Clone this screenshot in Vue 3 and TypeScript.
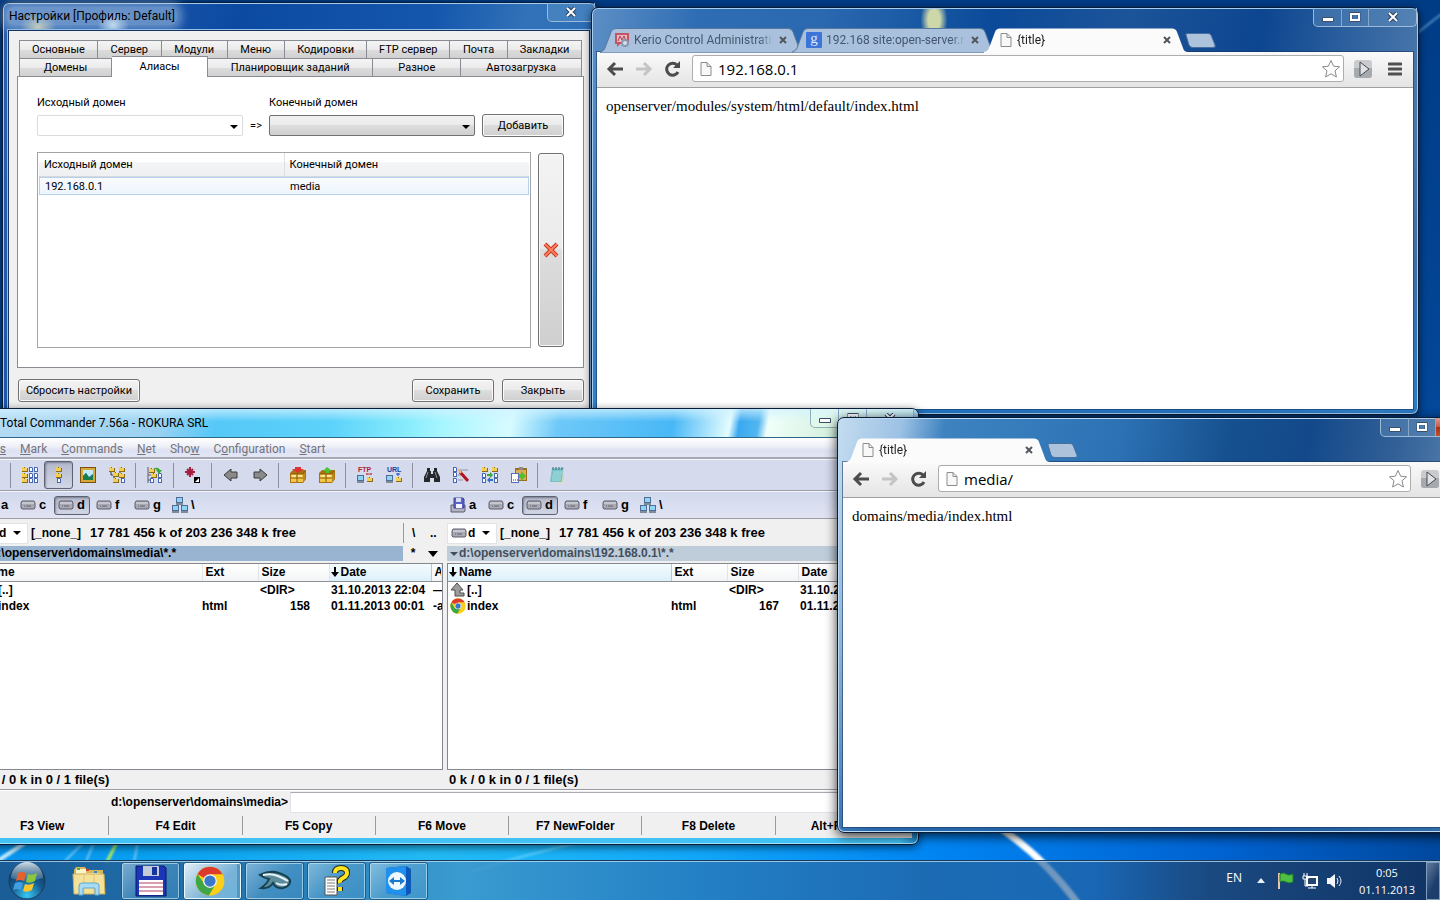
<script setup lang="ts">
import { ref } from 'vue'

interface Shape {
  d?: string
  fill?: string
  stroke?: string
  w?: number
  text?: string
  x?: number
  y?: number
  size?: number
}

const box = (x: number, y: number, w: number, h: number, fill: string, stroke = 'none'): Shape => ({
  d: `M${x} ${y}h${w}v${h}h${-w}z`, fill, stroke, w: 1,
})
const folder = (x: number, y: number): Shape[] => [
  { d: `M${x} ${y}h3v1h3v4h-6z`, fill: '#8a6a14' },
  { d: `M${x} ${y}h2v1h3v3h-5z`, fill: '#f3cf54' },
]
const doc = (x: number, y: number): Shape[] => [
  { d: `M${x} ${y}h3l1 1v4h-4z`, fill: '#4666b8' },
  { d: `M${x + 1} ${y + 1}h2v3h-2z`, fill: '#ffffff' },
]
const pc = (x: number, y: number): Shape[] => [
  box(x, y, 7, 6, '#4f6c94'),
  box(x + 1, y + 1, 5, 4, '#8fd4f6'),
  box(x, y + 6, 7, 2, '#7f8b96'),
]
const crate = (arrow: string, up: boolean): Shape[] => [
  { d: 'M0 6l3-3h13v9l-3 4H0z', fill: '#a87310' },
  { d: 'M1 7h12v8H1z', fill: '#f2c648' },
  { d: 'M13 7l2-3v8l-2 3z', fill: '#c28b19' },
  { d: 'M7 7v8M1 11h12M1 7h12l2-3', stroke: '#8b5b08', w: 1 },
  { d: 'M2 8h4v2H2zM8 8h4v2H8z', fill: '#fbe69a' },
  { d: up ? 'M8 0l5 4h-3v2H7V4H4z' : 'M5 0h6v2h3L8 6 2 2h3z', fill: arrow },
]

const icons: Record<string, Shape[]> = {
  brief: [...folder(0, 0), ...folder(0, 6), ...folder(0, 11), ...doc(7, 0), ...doc(7, 6), ...doc(7, 11), ...doc(12, 0), ...doc(12, 6), ...doc(12, 11)],
  full: [...folder(5, 0), ...folder(5, 6), ...doc(6, 11)],
  thumbs: [
    box(0, 0, 16, 16, '#7a5310'), box(1, 1, 14, 14, '#d9a83c'), box(3, 3, 10, 10, '#2b5f9a'),
    { d: 'M3 3h10v4L9 10 6 6 3 9z', fill: '#bfe9fb' }, { d: 'M3 9l3-3 3 5 4-3v5H3z', fill: '#15804a' },
  ],
  tree: [{ d: 'M2 4v4h3M5 8v5h3M11 3v5h2', stroke: '#333333', w: 1 }, ...folder(0, 0), ...folder(4, 5), ...folder(4, 11), ...folder(10, 0), ...folder(10, 6), ...doc(12, 11)],
  branch: [
    { d: 'M1 0v16M1 8h4M1 13h3', stroke: '#5a5a6a', w: 1 }, ...folder(2, 1), ...folder(4, 6), ...doc(3, 11), ...doc(11, 6), ...doc(11, 11),
    { d: 'M6 2q5-3 7 1h2l-3 4-3-4h2q-2-1-5-1z', fill: '#35a83a' },
  ],
  select: [
    { d: 'M5 0v10M0 5h10M2 2l6 6M8 2L2 8', stroke: '#a51f3c', w: 2 },
    box(9, 10, 6, 6, '#000000'), { d: 'M10 15l4-4v4z', fill: '#ffffff' },
  ],
  back: [{ d: 'M1 8l7-6v3h6v6H8v3z', fill: '#8a8a8a', stroke: '#3c3c3c', w: 1 }],
  forward: [{ d: 'M15 8L8 2v3H2v6h6v3z', fill: '#8a8a8a', stroke: '#3c3c3c', w: 1 }],
  pack: crate('#e03434', false),
  unpack: crate('#49c432', true),
  ftp: [{ text: 'FTP', x: 1, y: 5, size: 7, fill: '#b02238' }, ...pc(0, 8), ...folder(10, 10), { d: 'M9 7h6M10 6v2M14 6v2', stroke: '#c23a3a', w: 1 }],
  url: [{ text: 'URL', x: 1, y: 5, size: 7, fill: '#213f9c' }, ...pc(0, 8), ...folder(10, 10), { d: 'M12 6v3M10 7h4', stroke: '#2353b8', w: 1 }],
  search: [
    { d: 'M3 1h3v3h1v3h2V4h1V1h3v3l3 6v5h-6v-4H6v4H0v-5l3-6z', fill: '#26282c' },
    { d: 'M4 5l-2 6M11 5l2 6', stroke: '#8b9199', w: 1 },
  ],
  rename: [...doc(0, 0), ...doc(0, 5), ...doc(0, 11), { d: 'M5 3h10M5 8h3M5 13h5', stroke: '#8795a8', w: 1 }, { d: 'M7 5l8 9', stroke: '#b0171c', w: 3 }, { d: 'M5 2l3 4', stroke: '#efb37a', w: 2 }],
  sync: [...folder(0, 0), ...folder(10, 0), ...doc(0, 6), ...doc(0, 11), ...doc(12, 6), ...doc(12, 11), { d: 'M5 7h3V5l3 3-3 3V9H5z', fill: '#35a83a' }, { d: 'M11 12H8v-2l-3 3 3 3v-2h3z', fill: '#2f70c8' }],
  clip: [
    box(4, 1, 12, 13, '#9a6e17'), box(5, 3, 10, 10, '#d8ae57'), box(8, 0, 4, 3, '#8b8b8b'),
    box(0, 6, 8, 10, '#5a70b4'), box(1, 7, 6, 8, '#ffffff'), { d: 'M2 13h1M4 13h1M6 13h1', stroke: '#29376b', w: 1 },
    { d: 'M8 7h2V4l5 5-5 5v-3H8z', fill: '#53bd2f' },
  ],
  notepad: [
    { d: 'M3 1h12l-1 14H1z', fill: '#75c2c8' }, { d: 'M14 2h1l-1 14H4l9-1z', fill: '#e9dfb5' },
    { d: 'M4 5h9M4 7h9M3 9h9M3 11h9M3 13h9', stroke: '#a9dde0', w: 1 }, { d: 'M4 0v3M7 0v3M10 0v3M13 0v3', stroke: '#436f80', w: 1 },
  ],
  drive: [
    { d: 'M2 4h12l1 2v5l-1 1H2l-1-1V6z', fill: '#a9a9b4', stroke: '#5e5e6c', w: 1 },
    { d: 'M2 6h12', stroke: '#e4e4ec', w: 1 }, { d: 'M4 9h1M6 9h5', stroke: '#62626e', w: 1 },
  ],
  floppy: [
    { d: 'M1 8h14v6l-1 1H1z', fill: '#b3b3c2', stroke: '#5e5e6c', w: 1 },
    { d: 'M4 1h9l1 1v9H4z', fill: '#5a62c4', stroke: '#3c4497', w: 1 }, box(6, 1, 5, 4, '#d8daf2'), box(6, 7, 6, 4, '#f4f4ff'),
  ],
  net: [...pc(4, 0), ...pc(0, 8), ...pc(9, 8)],
  up: [{ d: 'M7 1l6 7h-3v3h4v3H5V8H1z', fill: '#9c9c9c', stroke: '#4c4c4c', w: 1 }],
}

interface Tab { title: string; icon: string; active: boolean }
const browsers = [
  {
    id: 'browser-server', address: '192.168.0.1', body: 'openserver/modules/system/html/default/index.html',
    tabs: [
      { title: 'Kerio Control Administration', icon: 'kerio', active: false },
      { title: '192.168 site:open-server.ru', icon: 'google', active: false },
      { title: '{title}', icon: 'page', active: true },
    ] as Tab[],
  },
  {
    id: 'browser-media', address: 'media/', body: 'domains/media/index.html',
    tabs: [{ title: '{title}', icon: 'page', active: true }] as Tab[],
  },
]

const tabRows = [
  [['Основные', 78], ['Сервер', 64], ['Модули', 66], ['Меню', 57], ['Кодировки', 83], ['FTP сервер', 83], ['Почта', 58], ['Закладки', 74]],
  [['Домены', 92], ['Алиасы', 96], ['Планировщик заданий', 166], ['Разное', 88], ['Автозагрузка', 121]],
] as [string, number][][]

const menu = [['File', 's', ''], ['', 'M', 'ark'], ['', 'C', 'ommands'], ['', 'N', 'et'], ['Sho', 'w', ''], ['C', 'o', 'nfiguration'], ['', 'S', 'tart']]
const tools = ['', '|', 'brief', 'full', 'thumbs', 'tree', '|', 'branch', '|', 'select', '|', 'back', 'forward', '|', 'pack', 'unpack', '|', 'ftp', 'url', '|', 'search', 'rename', 'sync', 'clip', '|', 'notepad']
const drives = [['a', 'floppy'], ['c', 'drive'], ['d', 'drive'], ['f', 'drive'], ['g', 'drive'], ['\\', 'net']]
const panels = [
  { id: 'left', path: 'd:\\openserver\\domains\\media\\*.*', current: true, sort: 'Date', size: '158', time: '01.11.2013 00:01' },
  { id: 'right', path: 'd:\\openserver\\domains\\192.168.0.1\\*.*', current: false, sort: 'Name', size: '167', time: '01.11.2013 00:01' },
]
const columns = ['Name', 'Ext', 'Size', 'Date', 'Attr']
const fkeys = ['F3 View', 'F4 Edit', 'F5 Copy', 'F6 Move', 'F7 NewFolder', 'F8 Delete', 'Alt+F4 Exit']
const tasks = ['save', 'chrome', 'server', 'help', 'viewer']
const command = ref('')
</script>

<template>
  <div class="desktop">
    <svg class="wallpaper" viewBox="0 0 1440 900" preserveAspectRatio="xMidYMid slice" aria-hidden="true">
      <defs>
        <linearGradient id="sky" x1="0" x2="1"><stop offset="0" stop-color="#0793ee" /><stop offset=".1" stop-color="#08a0f2" /><stop offset=".3" stop-color="#22baf4" /><stop offset=".48" stop-color="#12a8fa" /><stop offset=".65" stop-color="#0084f2" /><stop offset=".85" stop-color="#0062d0" /><stop offset="1" stop-color="#00489e" /></linearGradient>
        <linearGradient id="dusk" x1="0" x2="0" y1="0" y2="1"><stop offset="0" stop-color="#003c86" /><stop offset=".4" stop-color="#034596" /><stop offset=".75" stop-color="#0456b4" stop-opacity=".6" /><stop offset=".9" stop-color="#0456b4" stop-opacity="0" /></linearGradient>
        <filter id="soft"><feGaussianBlur stdDeviation="1" /></filter>
      </defs>
      <rect width="1440" height="900" fill="url(#sky)" />
      <rect width="1440" height="900" fill="url(#dusk)" />
      <g fill="none" filter="url(#soft)">
        <path d="M984 818Q1040 850 1084 912" stroke="#fff" stroke-width="7" />
        <path d="M-4 862L26 842" stroke="#c5ecff" stroke-width="4" />
        <path d="M64 862L84 842M86 862L94 842M134 862l4-20" stroke="#71c8f7" stroke-width="2" />
        <path d="M106 864L118 840" stroke="#b9ee58" stroke-width="3" />
        <path d="M470 872Q540 850 600 838" stroke="#5bd0ff" stroke-width="2" />
        <path d="M1416 34L1444 12" stroke="#4d8bc4" stroke-width="2" />
      </g>
    </svg>

    <main class="workspace">
      <section class="window settings" aria-label="Настройки">
        <header class="titlebar">
          <h1 class="glow">Настройки [Профиль: Default]</h1>
          <div class="controls"><button class="close" type="button" aria-label="Закрыть окно"><svg width="12" height="10" viewBox="0 0 12 10"><path d="M2 1l8 8M10 1L2 9" stroke="#28405f" stroke-width="4" /><path d="M2 1l8 8M10 1L2 9" stroke="#fff" stroke-width="2" /></svg></button></div>
        </header>
        <div class="client">
          <div v-for="(row, r) in tabRows" :key="r" class="tab-row" role="tablist">
            <button v-for="t in row" :key="t[0]" type="button" role="tab" :class="{ on: t[0] === 'Алиасы' }" :aria-selected="t[0] === 'Алиасы'" :style="{ flexGrow: t[1] }"><span>{{ t[0] }}</span></button>
          </div>
          <div class="sheet">
            <div class="form">
              <label for="src">Исходный домен</label><i></i><label for="dst">Конечный домен</label><i></i>
              <div class="pick"><select id="src"></select><svg width="8" height="4" viewBox="0 0 8 4"><path d="M0 0h8L4 4z" /></svg></div>
              <span class="maps">=&gt;</span>
              <div class="pick gray"><select id="dst"></select><svg width="8" height="4" viewBox="0 0 8 4"><path d="M0 0h8L4 4z" /></svg></div>
              <button class="btn add" type="button">Добавить</button>
            </div>
            <div class="aliases">
              <div class="listbox">
                <table>
                  <thead><tr><th>Исходный домен</th><th>Конечный домен</th></tr></thead>
                  <tbody><tr><td>192.168.0.1</td><td>media</td></tr></tbody>
                </table>
              </div>
              <button class="btn remove" type="button" aria-label="Удалить"><svg width="16" height="16" viewBox="0 0 16 16"><path d="M2 2l12 12M14 2L2 14" stroke="#c23a20" stroke-width="4" /><path d="M2 2l12 12M14 2L2 14" stroke="#ff7d5c" stroke-width="2" /></svg></button>
            </div>
          </div>
          <footer><button class="btn reset" type="button">Сбросить настройки</button><button class="btn" type="button">Сохранить</button><button class="btn" type="button">Закрыть</button></footer>
        </div>
      </section>

      <section v-for="b in browsers" :key="b.id" class="window browser" :class="b.id">
        <header class="strip">
          <div v-for="(t, i) in b.tabs" :key="i" class="tab" :class="{ on: t.active }">
            <svg class="tab-shape" width="204" height="25" viewBox="0 0 204 25"><path d="M0 25V24Q4 23 5 20L11 4Q12 .5 16 .5H188Q192 .5 193 4L199 20Q200 24 204 24V25Z" /></svg>
            <svg v-if="t.icon === 'kerio'" class="fav" viewBox="0 0 16 16"><path d="M1 1h14v11H6l-3 3v-3H1z" fill="#c45464" /><path d="M3 3h10v7H3z" fill="#e9bac2" /><path d="M4 9l2-5 2 4 2-4 2 5" stroke="#b43c50" fill="none" /><circle cx="11" cy="11" r="4" fill="#8798b0" /><circle cx="11" cy="11" r="2" fill="#d5dfec" /></svg>
            <svg v-else-if="t.icon === 'google'" class="fav" viewBox="0 0 16 16"><rect width="16" height="16" rx="1" fill="#3c74d8" /><text x="8" y="11" text-anchor="middle" font-family="Liberation Serif, serif" font-size="15" fill="#dfeaff">g</text></svg>
            <svg v-else class="fav" viewBox="0 0 16 16"><path d="M3 1.500h6l4 4v9H3z" fill="#f8f8f8" stroke="#8c8c8c" /><path d="M9 1.500v4h4" fill="none" stroke="#8c8c8c" /></svg>
            <span class="tab-title">{{ t.title }}</span>
            <button type="button" aria-label="Close tab"><svg width="8" height="8" viewBox="0 0 8 8"><path d="M1 1l6 6M7 1L1 7" stroke="#505660" stroke-width="2" /></svg></button>
          </div>
          <button class="new-tab" type="button" aria-label="New tab"><svg width="31" height="15" viewBox="0 0 31 15"><path d="M1 2Q0 .5 3 .5H23Q25 .5 26 2L30 12Q31 14.500 28 14.500H8Q5 14.500 4 12Z" fill="#adc3dc" stroke="#47709f" /></svg></button>
          <div class="controls">
            <button type="button" aria-label="Minimize"><svg width="12" height="10" viewBox="0 0 12 10"><path d="M.5 5.500h11v4H.5z" fill="#fff" stroke="#3b4d68" /></svg></button>
            <button type="button" aria-label="Maximize"><svg width="12" height="10" viewBox="0 0 12 10"><path d="M2 1.500h8v7H2z" fill="none" stroke="#3b4d68" stroke-width="3" /><path d="M2 2h8v6H2z" fill="none" stroke="#fff" stroke-width="2" /></svg></button>
            <button class="close" type="button" aria-label="Close"><svg width="12" height="10" viewBox="0 0 12 10"><path d="M2 1l8 8M10 1L2 9" stroke="#28405f" stroke-width="4" /><path d="M2 1l8 8M10 1L2 9" stroke="#fff" stroke-width="2" /></svg></button>
          </div>
        </header>
        <div class="view">
          <nav class="toolbar">
            <button type="button" aria-label="Back"><svg width="18" height="16" viewBox="0 0 18 16"><path d="M17 8H4M9 2L3 8l6 6" fill="none" stroke="#4c4c4c" stroke-width="3" /></svg></button>
            <button type="button" aria-label="Forward"><svg width="18" height="16" viewBox="0 0 18 16"><path d="M1 8h13M9 2l6 6-6 6" fill="none" stroke="#c4c4c4" stroke-width="3" /></svg></button>
            <button type="button" aria-label="Reload"><svg width="18" height="16" viewBox="0 0 18 16"><path d="M14 11a6 6 0 1 1-1-7" fill="none" stroke="#4c4c4c" stroke-width="3" /><path d="M16 0v7H9z" fill="#4c4c4c" /></svg></button>
            <div class="omnibox">
              <svg class="fav" viewBox="0 0 16 16"><path d="M3 1.500h6l4 4v9H3z" fill="#f8f8f8" stroke="#8c8c8c" /><path d="M9 1.500v4h4" fill="none" stroke="#8c8c8c" /></svg>
              <input type="text" :value="b.address" aria-label="Address" />
              <button type="button" aria-label="Bookmark"><svg width="20" height="20" viewBox="0 0 20 20"><path d="M10 1.500l2.600 5.700 6 .6-4.600 4 1.400 6.200L10 14.800 4.600 18 6 11.800l-4.600-4 6-.6z" fill="#fff" stroke="#8a8a8a" /></svg></button>
            </div>
            <button class="ext" type="button" aria-label="Extension"><svg width="20" height="20" viewBox="0 0 20 20"><rect x="1" y="1" width="18" height="18" rx="3" fill="#c9cbce" /><path d="M1 9h18v7a3 3 0 0 1-3 3H4a3 3 0 0 1-3-3z" fill="#a6aaae" /><path d="M7 3l9 7-9 7z" fill="#dfe1e3" stroke="#444a50" /></svg></button>
            <button class="more" type="button" aria-label="Menu"><svg width="14" height="14" viewBox="0 0 14 14"><path d="M1 2h12M1 7h12M1 12h12" stroke="#505050" stroke-width="3" stroke-linecap="round" /></svg></button>
          </nav>
          <article>{{ b.body }}</article>
        </div>
      </section>

      <section class="window commander" aria-label="Total Commander">
        <header class="titlebar">
          <h1>Total Commander 7.56a - ROKURA SRL</h1>
          <div class="controls">
            <button type="button" aria-label="Minimize"><svg width="12" height="10" viewBox="0 0 12 10"><path d="M.5 5.500h11v4H.5z" fill="#fff" stroke="#3b4d68" /></svg></button>
            <button type="button" aria-label="Maximize"><svg width="12" height="10" viewBox="0 0 12 10"><path d="M2 1.500h8v7H2z" fill="none" stroke="#3b4d68" stroke-width="3" /><path d="M2 2h8v6H2z" fill="none" stroke="#fff" stroke-width="2" /></svg></button>
            <button class="close" type="button" aria-label="Close"><svg width="12" height="10" viewBox="0 0 12 10"><path d="M2 1l8 8M10 1L2 9" stroke="#28405f" stroke-width="4" /><path d="M2 1l8 8M10 1L2 9" stroke="#fff" stroke-width="2" /></svg></button>
          </div>
        </header>
        <div class="client">
          <nav class="menubar"><button v-for="(m, i) in menu" :key="i" type="button">{{ m[0] }}<u>{{ m[1] }}</u>{{ m[2] }}</button></nav>
          <div class="tools">
            <template v-for="(t, i) in tools" :key="i">
              <hr v-if="t === '|'" />
              <button v-else type="button" :class="{ on: t === 'full' }" :aria-label="t || 'refresh'">
                <svg width="16" height="16" viewBox="0 0 16 16">
                  <template v-for="(s, k) in icons[t]" :key="k">
                    <text v-if="s.text" :x="s.x" :y="s.y" :font-size="s.size" :fill="s.fill" font-family="Liberation Sans, sans-serif" font-weight="bold">{{ s.text }}</text>
                    <path v-else :d="s.d" :fill="s.fill || 'none'" :stroke="s.stroke" :stroke-width="s.w" />
                  </template>
                </svg>
              </button>
            </template>
          </div>
          <div class="drivebar">
            <div v-for="p in panels" :key="p.id">
              <button v-for="d in drives" :key="d[0]" type="button" :class="{ on: d[0] === 'd' }"><svg width="16" height="16" viewBox="0 0 16 16"><path v-for="(s, k) in icons[d[1]]" :key="k" :d="s.d" :fill="s.fill || 'none'" :stroke="s.stroke" :stroke-width="s.w" /></svg>{{ d[0] }}</button>
            </div>
          </div>
          <div class="panels">
            <section v-for="p in panels" :key="p.id" class="panel" :class="{ current: p.current }">
              <div class="info">
                <div class="drive-pick"><svg width="16" height="16" viewBox="0 0 16 16"><path v-for="(s, k) in icons.drive" :key="k" :d="s.d" :fill="s.fill || 'none'" :stroke="s.stroke" :stroke-width="s.w" /></svg><select :aria-label="'Drive, ' + p.id"><option>d</option></select><svg width="8" height="4" viewBox="0 0 8 4"><path d="M0 0h8L4 4z" /></svg></div>
                <span>[_none_]</span><span class="free">17 781 456 k of 203 236 348 k free</span>
                <div class="jump"><button type="button">\</button><button type="button">..</button></div>
              </div>
              <div class="path"><span><svg width="8" height="4" viewBox="0 0 8 4"><path d="M0 0h8L4 4z" fill="currentColor" /></svg>{{ p.path }}</span><button type="button">*</button><button type="button" aria-label="History"><svg width="10" height="6" viewBox="0 0 10 6"><path d="M0 0h10L5 6z" /></svg></button></div>
              <div class="files">
                <table>
                  <colgroup><col class="c-name" /><col class="c-ext" /><col class="c-size" /><col class="c-date" /><col /></colgroup>
                  <thead><tr><th v-for="c in columns" :key="c" :class="{ sorted: c === p.sort }"><svg v-if="c === p.sort" width="8" height="10" viewBox="0 0 8 10"><path d="M3 0h2v5h3L4 10 0 5h3z" /></svg>{{ c }}</th></tr></thead>
                  <tbody>
                    <tr><td><svg width="16" height="16" viewBox="0 0 16 16"><path v-for="(s, k) in icons.up" :key="k" :d="s.d" :fill="s.fill" :stroke="s.stroke" /></svg>[..]</td><td></td><td>&lt;DIR&gt;</td><td>31.10.2013 22:04</td><td>—</td></tr>
                    <tr><td><svg width="16" height="16" viewBox="0 0 48 48"><circle cx="24" cy="24" r="23" fill="#fbce18" /><path d="M24 24L4 13A23 23 0 0 1 44 13H24z" fill="#dc3a2c" /><path d="M4 13A23 23 0 0 0 22 47l10-18-18 1z" fill="#3fa648" /><circle cx="24" cy="24" r="10" fill="#fff" /><circle cx="24" cy="24" r="8" fill="#3a78c8" /></svg>index</td><td>html</td><td class="num">{{ p.size }}</td><td>{{ p.time }}</td><td>-a--</td></tr>
                  </tbody>
                </table>
              </div>
              <p class="status">0 k / 0 k in 0 / 1 file(s)</p>
            </section>
          </div>
          <div class="command"><label for="cmd">d:\openserver\domains\media&gt;</label><input id="cmd" v-model="command" type="text" /></div>
          <div class="fkeys"><button v-for="f in fkeys" :key="f" type="button">{{ f }}</button></div>
        </div>
      </section>
    </main>

    <footer class="taskbar">
      <button class="orb" type="button" aria-label="Start">
        <svg width="40" height="40" viewBox="0 0 40 40">
          <defs><radialGradient id="orb" cx=".5" cy=".9" r=".9"><stop offset="0" stop-color="#37c8f4" /><stop offset=".5" stop-color="#155a8e" /><stop offset="1" stop-color="#0d2f52" /></radialGradient><linearGradient id="gloss" x1="0" x2="0" y1="0" y2="1"><stop offset="0" stop-color="#e6f1f8" stop-opacity=".9" /><stop offset="1" stop-color="#8cb4cc" stop-opacity=".25" /></linearGradient></defs>
          <circle cx="20" cy="20" r="18" fill="url(#orb)" stroke="#1b3b58" /><path d="M4 17A16 16 0 0 1 36 17Q20 23 4 17z" fill="url(#gloss)" />
          <path d="M11 12q4-2 8 0l-2 8q-4-2-8 0z" fill="#e8602c" /><path d="M21 13q4 2 9-1l-2 8q-5 3-9 1z" fill="#8cc63c" /><path d="M8 22q4-2 8 0l-2 7q-4-2-8 0z" fill="#3fa0e4" /><path d="M18 23q4 2 9-1l-2 7q-5 3-9 1z" fill="#fbc52c" />
        </svg>
      </button>
      <button class="pinned" type="button" aria-label="Explorer">
        <svg width="34" height="32" viewBox="0 0 34 32"><path d="M2 5l2-3h9l2 3h16v23H2z" fill="#d6b75c" /><path d="M4 4h10v4h14v16H4z" fill="#faf4cb" /><path d="M5 3h3v2H5z" fill="#4db33d" /><path d="M14 4h3v2h-3z" fill="#d1402f" /><path d="M22 6h3v2h-3z" fill="#3689c9" /><path d="M1 9h31l1 20H2z" fill="#f6e199" stroke="#cfae58" /><path d="M12 8v20M22 8v20" stroke="#e2c678" /><path d="M7 30v-9q0-3 3-3h14q3 0 3 3v9h-4v-7H11v7z" fill="#a9dcf3" stroke="#5da9d0" /></svg>
      </button>
      <button v-for="t in tasks" :key="t" class="task" :class="{ on: t === 'chrome' }" type="button" :aria-label="t">
        <svg v-if="t === 'save'" width="32" height="32" viewBox="0 0 32 32"><path d="M1 1h28l2 2v28H1z" fill="#1c36b8" stroke="#0b1766" /><path d="M8 1h16v10H8z" fill="#c3cbd8" /><path d="M17 2h5v8h-5z" fill="#17339c" /><path d="M4 15h24v15H4z" fill="#fff" /><path d="M4 18h24M4 22h24M4 26h24" stroke="#b23f5c" /></svg>
        <svg v-else-if="t === 'chrome'" width="30" height="30" viewBox="0 0 48 48"><circle cx="24" cy="24" r="23" fill="#fbce18" /><path d="M24 24L4 13A23 23 0 0 1 44 13H24z" fill="#dc3a2c" /><path d="M4 13A23 23 0 0 0 22 47l11-18-17 1z" fill="#3fa648" /><circle cx="24" cy="24" r="11" fill="#f2f5f5" /><circle cx="24" cy="24" r="9" fill="#3a78c8" /></svg>
        <svg v-else-if="t === 'server'" width="34" height="24" viewBox="0 0 34 24"><path d="M2 6Q12 1 21 4T32 11Q33 17 25 19Q18 20 15 14Q11 20 3 19Q9 15 11 10Q6 9 2 6z" fill="#5d8b9c" stroke="#174252" stroke-width="2" /><path d="M5 6q8-2 15 1t10 5M18 14q5 3 11 1" fill="none" stroke="#e5f3f7" stroke-width="2" /></svg>
        <svg v-else-if="t === 'help'" width="30" height="32" viewBox="0 0 30 32"><path d="M3 12h12v18H3z" fill="#fff" stroke="#555" /><path d="M5 15h8M5 18h8M5 21h8M5 24h8M5 27h8" stroke="#7d7d7d" /><path d="M13 8Q13 3 19 3T25 8Q25 11 21 13T18 18M18 22v4" fill="none" stroke="#222" stroke-width="6" /><path d="M13 8Q13 3 19 3T25 8Q25 11 21 13T18 18M18 22v4" fill="none" stroke="#fbe61e" stroke-width="4" /></svg>
        <svg v-else width="30" height="32" viewBox="0 0 30 32"><path d="M2 3l20-2 5 3v24l-5 3L2 28z" fill="#0b58b8" /><path d="M2 3l20-2v30L2 28z" fill="#2190ec" /><circle cx="13" cy="16" r="9" fill="#eef8ff" /><path d="M5 16l5-4v3h6v-3l5 4-5 4v-3h-6v3z" fill="#1979cc" /></svg>
      </button>
      <div class="tray">
        <button class="lang" type="button">EN</button>
        <button class="chevron" type="button" aria-label="Show hidden icons"><svg width="8" height="5" viewBox="0 0 8 5"><path d="M4 0l4 5H0z" fill="#e8f0f8" /></svg></button>
        <button type="button" aria-label="Action Center"><svg width="18" height="18" viewBox="0 0 18 18"><path d="M2 1h2v16H2z" fill="#e7c7a9" /><path d="M4 2q4-2 6 0t7 0v8q-4 2-7 0t-6 0z" fill="#4fc043" stroke="#1d7a2b" /></svg></button>
        <button type="button" aria-label="Network"><svg width="18" height="18" viewBox="0 0 18 18"><path d="M6 5h10v8H6z" fill="#23466f" stroke="#fff" stroke-width="2" /><path d="M11 14v2M7 16h8M3 1v3M6 1v3M2 4h5v3H2zM4 7v7h3" fill="none" stroke="#fff" stroke-width="1" /></svg></button>
        <button type="button" aria-label="Volume"><svg width="18" height="16" viewBox="0 0 18 16"><path d="M1 5h3l5-4v14l-5-4H1z" fill="#f2f6fa" /><path d="M11 5q2 3 0 6M13 3q4 5 0 10" fill="none" stroke="#e6edf4" /></svg></button>
        <time datetime="2013-11-01T00:05">0:05<br />01.11.2013</time>
        <button class="peek" type="button" aria-label="Show desktop"></button>
      </div>
    </footer>
  </div>
</template>

<style>
html, body { background: #034596; overflow: hidden; }
</style>

<style scoped>
* { box-sizing: border-box; }
button, input, select { font: inherit; color: inherit; margin: 0; padding: 0; border: 0; background: none; border-radius: 0; outline: 0; }
h1, p { margin: 0; font: inherit; }
svg { flex: none; display: block; }
table { border-collapse: collapse; table-layout: fixed; width: 100%; }
th, td { font: inherit; text-align: left; padding: 0; white-space: nowrap; overflow: hidden; }
select { appearance: none; }
.desktop { position: relative; display: grid; grid-template-rows: 1fr 40px; height: 100vh; overflow: hidden; font: 12px/16px Roboto, "Noto Sans", sans-serif; color: #000; }
.wallpaper { position: absolute; inset: 0; width: 100%; height: 100%; }
.workspace { position: relative; overflow: hidden; }

.window { position: absolute; display: flex; flex-direction: column; border: 1px solid #0b1c38; border-radius: 7px; box-shadow: inset 0 0 0 1px #a5cdf0, 0 2px 9px rgba(0, 0, 0, .6); }
.controls { display: flex; align-self: flex-start; margin-left: auto; margin-right: 1px; height: 19px; border: 1px solid #9dbbd9; border-top: 0; border-radius: 0 0 5px 5px; background: rgba(120, 165, 210, .3); }
.controls button { width: 28px; display: grid; place-items: center; border-right: 1px solid #87a8ca; }
.controls .close { width: 46px; border-right: 0; }
.titlebar { display: flex; align-items: center; }

.settings { left: 2px; top: 2px; width: 595px; height: 414px; padding: 0 6px 6px 5px; background: radial-gradient(ellipse 18px 14px at 35px 24px, rgba(226, 218, 160, .9), transparent), radial-gradient(ellipse 16px 14px at 110px 22px, rgba(225, 245, 255, .9), transparent), linear-gradient(105deg, #2a62b0 0, #0c4aa2 34%, #1557ad 62%, #3272b8 75%, #256bb8 100%); font: 11px/14px Roboto, "DejaVu Sans", sans-serif; }
.settings .titlebar { height: 27px; }
.settings .controls { margin-right: -5px; }
.glow { padding: 0 2px; font: 12px/18px Roboto, sans-serif; background: rgba(178, 203, 230, .5); box-shadow: 0 0 8px 5px rgba(178, 203, 230, .5); border-radius: 6px; margin: 0 0 2px -1px; }
.settings .client { flex: 1; background: #f0f0f0; border: 1px solid #173460; box-shadow: 0 0 0 1px #91bde9; padding: 9px 5px 0 8px; }
.tab-row { display: flex; height: 18px; margin: 0 2px; }
.tab-row button { flex: 1 1 0; min-width: 0; height: 18px; border: 1px solid #8a8c94; border-left-width: 0; border-bottom: 0; background: linear-gradient(#f4f4f4 0, #ebebeb 50%, #dcdcdc 52%, #d0d0d0 100%); white-space: nowrap; }
.tab-row button:first-child { border-left-width: 1px; }
.tab-row .on { position: relative; z-index: 1; height: 21px; margin-top: -2px; background: #fff; }
.sheet { height: 292px; background: #fff; border: 1px solid #8a8c94; padding: 19px 19px 0; }
.form { display: grid; grid-template-columns: 1fr 26px 1fr 89px; grid-template-rows: 18px 22px; }
.maps { text-align: center; padding-top: 5px; }
.pick { position: relative; height: 21px; margin-top: 1px; border: 1px solid #dadce0; border-radius: 2px; background: #fff; }
.pick.gray { border-color: #707070; background: linear-gradient(#f2f2f2 0, #ebebeb 48%, #dddddd 50%, #cfcfcf 100%); }
.pick select { width: 100%; height: 100%; display: block; }
.pick svg { position: absolute; right: 4px; top: 9px; pointer-events: none; }
.btn { height: 23px; border: 1px solid #707070; border-radius: 3px; background: linear-gradient(#f3f3f3 0, #ebebeb 49%, #dddddd 50%, #cfcfcf 100%); box-shadow: inset 0 0 0 1px #fbfbfb; white-space: nowrap; }
.add { margin-left: 7px; }
.aliases { display: flex; gap: 7px; height: 196px; margin-top: 16px; }
.listbox { flex: 1; border: 1px solid #a2a4a8; padding: 0 1px; }
.listbox th { height: 24px; padding-left: 5px; border-bottom: 2px solid #d8d8da; background: linear-gradient(#fff 0, #fff 40%, #f3f4f5 42%, #eff0f2 100%); }
.listbox th + th { border-left: 1px solid #dedfe1; }
.listbox tbody tr { outline: 1px solid #b4d2ee; outline-offset: -1px; background: linear-gradient(#fafcff, #ecf4fd); }
.listbox td { height: 18px; padding-left: 6px; }
.remove { width: 26px; height: 194px; display: grid; place-items: center; margin-top: 1px; }
.settings footer { display: flex; gap: 8px; margin-top: 11px; }
.settings footer .btn { width: 82px; }
.settings footer .reset { width: 122px; margin: 0 auto 0 1px; }

.browser-server { left: 591px; top: 7px; right: 21px; height: 408px; background: radial-gradient(ellipse 15px 26px at 342px 12px, rgba(225, 230, 170, .9) 40%, transparent 90%), linear-gradient(rgba(20, 80, 160, 0) 60%, rgba(40, 130, 210, .8) 100%), linear-gradient(100deg, #5d8fc5 0, #2e6db4 12%, #2a69b0 26%, #0b4a99 45%, #1c5499 60%, #0d4690 75%, #4a78ab 94%, #2d619e 100%); }
.browser-media { left: 837px; top: 417px; right: -46px; height: 416px; z-index: 3; box-shadow: inset 0 0 0 1px #b9dbf5, 0 3px 12px rgba(0, 0, 0, .8); background: linear-gradient(rgba(180, 205, 230, 0) 12%, rgba(130, 170, 210, .55) 50%, rgba(30, 90, 160, .7) 100%), linear-gradient(100deg, #c4dcf0 0, #9cc1e4 9%, #3e83c0 15%, #2c71b4 40%, #16508e 55%, #13498a 66%, #325f96 78%, #7ba6ca 100%); }
.strip { display: flex; align-items: flex-end; height: 44px; flex: none; padding-left: 8px; }
.tab { position: relative; display: flex; align-items: center; width: 204px; height: 24px; margin-right: -12px; padding: 0 16px 0 14px; color: #44566f; }
.tab-shape { position: absolute; left: 0; top: 0; fill: #a9c1dc; stroke: #58789f; }
.tab > :not(.tab-shape) { position: relative; }
.tab.on { z-index: 1; color: #222; }
.tab.on .tab-shape { fill: #fbfbfb; stroke: none; }
.fav { width: 16px; height: 16px; flex: none; }
.tab-title { flex: 1; overflow: hidden; white-space: nowrap; margin: 0 6px 0 4px; mask-image: linear-gradient(90deg, #000 90%, transparent); }
.on .tab-title { margin-left: 3px; }
.tab button { width: 9px; }
.new-tab { margin: 0 0 4px 9px; }
.strip .close { width: 47px; }
.strip .controls button:nth-child(2) { width: 27px; }
.browser-media .controls .close { background: linear-gradient(#dc9b90 0, #c85d4a 48%, #a82f18 50%, #c4502f 100%); border-radius: 0 0 4px 0; }
.view { flex: 1; display: flex; flex-direction: column; margin: 0 5px 5px; background: #fff; box-shadow: 0 0 0 1px rgba(20, 50, 90, .55); }
.toolbar { display: flex; align-items: center; gap: 11px; height: 36px; padding: 0 11px 2px 9px; background: linear-gradient(#fafafa, #e4e4e4); border-bottom: 1px solid #a0a0a0; }
.omnibox { flex: 1; display: flex; align-items: center; height: 27px; margin-left: -1px; padding: 0 2px 0 5px; border: 1px solid #adadad; border-radius: 3px; background: #fff; }
.omnibox input { flex: 1; min-width: 0; margin-left: 4px; font: 15px/20px "Open Sans", "Noto Sans", sans-serif; }
.ext { margin-left: -2px; }
.more { margin-left: 4px; }
article { padding: 8px 9px; font: 15px/20px "Liberation Serif", serif; }

.commander { left: -30px; top: 408px; width: 949px; height: 437px; z-index: 2; padding: 0 6px 6px 5px; box-shadow: inset 0 0 0 1px #9fe3fb, 0 2px 9px rgba(0, 0, 0, .6); background: linear-gradient(90deg, transparent 98%, rgba(20, 110, 190, .7)), linear-gradient(rgba(255, 255, 255, 0) 6%, #35bdf0 8%, #42c2f4 100%); }
.commander .titlebar { height: 28px; margin: 0 -6px 0 -5px; padding: 0 0 0 29px; border-radius: 6px 6px 0 0; background: linear-gradient(rgba(210, 242, 255, .75) 0, rgba(120, 215, 250, 0) 45%, rgba(255, 255, 255, 0) 100%), linear-gradient(100deg, #b9dcf4 0, #9bd2f2 20%, #56c8f8 26%, #5cd2fa 38%, #86ecfc 46%, #a8f6ff 50%, #d7fbff 57%, #6ec8f8 62%, #48b8f6 74%, #e4fdff 80%, #3aa9f0 81%, #52b6f0 83%, #f0fffa 84%, #d4f0de 91%, #6aa8cc 100%); }
.commander .controls { margin-right: 4px; border-color: #8fb0b8; background: rgba(235, 255, 245, .35); }
.commander > .client { flex: 1; display: flex; flex-direction: column; min-height: 0; background: #f0f0f0; border-top: 1px solid #2d6688; font: bold 12px/16px "Liberation Sans", Arial, sans-serif; }
.menubar { display: flex; gap: 14px; height: 21px; padding-left: 5px; background: linear-gradient(#fff 0, #eef0f8 40%, #dde1f1 60%, #e2e6f5 90%, #a8a8b4 92%); font: 12px/18px Roboto, sans-serif; color: #74747c; }
.tools { display: flex; align-items: center; height: 32px; padding-left: 1px; background: #d5daed; border-bottom: 1px solid #9b9ba6; border-top: 1px solid #f6f7fc; }
.tools button { width: 29px; height: 28px; display: grid; place-items: center; }
.tools .on, .drivebar .on { border: 1px solid #5e6270; border-radius: 3px; background: linear-gradient(#b3b8ca, #d2d7e8); box-shadow: inset 1px 1px 2px rgba(50, 55, 80, .45); }
.tools hr { width: 1px; height: 25px; margin: 0 4px; border: 0; background: #8d919f; }
.drivebar { display: grid; grid-template-columns: 1fr 1fr; height: 28px; background: linear-gradient(#d2d8ec, #e0e4f4); border-top: 1px solid #f6f7fc; border-bottom: 1px solid #9b9ba6; }
.drivebar div { display: flex; align-items: center; gap: 2px; padding-left: 2px; }
.drivebar button { display: flex; align-items: center; gap: 3px; width: 36px; height: 19px; padding-left: 4px; white-space: nowrap; font-size: 13px; }
.drivebar .on { padding-left: 3px; }
.panels { flex: 1; display: grid; grid-template-columns: 1fr 1fr; gap: 4px; min-height: 0; padding-left: 2px; }
.panel { display: flex; flex-direction: column; min-width: 0; padding-top: 3px; }
.info { display: flex; align-items: center; height: 22px; white-space: nowrap; }
.drive-pick { position: relative; display: flex; align-items: center; width: 50px; height: 21px; padding: 0 6px 0 3px; border: 1px solid #e0e3e8; background: #fff; margin-right: 3px; }
.drive-pick select { flex: 1; min-width: 0; padding-left: 1px; }
.free { margin-left: 9px; font-size: 13px; }
.jump { display: flex; align-items: center; width: 40px; height: 20px; margin-left: auto; border-left: 1px solid #9a9a9a; }
.jump button { width: 20px; }
.path { display: flex; height: 19px; padding: 2px 0; line-height: 15px; }
.path span { flex: 1; display: flex; align-items: center; gap: 1px; padding-left: 3px; background: #bfcddb; color: #434e5a; }
.current .path span { background: #99b4d1; color: #000; }
.path button { width: 20px; display: grid; place-items: center; }
.files { flex: 1; border: 1px solid #828790; background: #fff; overflow: hidden; }
.c-name { width: 223px; } .c-ext { width: 56px; } .c-size { width: 71px; } .c-date { width: 102px; }
.files th { height: 17px; padding-left: 3px; border-right: 1px solid #e2e4e7; border-bottom: 1px solid #8e9298; background: linear-gradient(#fff, #f3f4f6); }
.files .sorted { padding-left: 1px; background: linear-gradient(#f4fbfe, #dcf0fa); border-color: #9cd3ec; border-bottom-color: #8e9298; }
.files th svg { display: inline-block; margin-right: 2px; vertical-align: -1px; }
.files td { height: 16px; padding-left: 2px; line-height: 16px; }
.files td:nth-child(2) { padding-left: 0; }
.files td svg { display: inline-block; vertical-align: top; margin-right: 1px; }
.files .num { text-align: right; padding-right: 19px; }
.status { height: 19px; padding: 2px 2px 0; font-size: 13px; white-space: nowrap; }
.command { display: grid; grid-template-columns: 312px 1fr; height: 24px; padding-top: 2px; border-top: 1px solid #9b9ba6; gap: 2px; box-shadow: inset 0 1px #fff; }
.command label { text-align: right; line-height: 20px; }
.command input { min-width: 0; background: #fff; border: 1px solid #e0e3ea; border-top-color: #a8abb2; }
.fkeys { display: flex; height: 25px; padding: 3px 4px 2px 0; }
.fkeys button { flex: 1 1 0; border-right: 1px solid #9a9a9a; height: 19px; }
.fkeys button:last-child { border-right: 0; }

.taskbar { position: relative; display: flex; align-items: center; padding-left: 7px; border-top: 1px solid #16395c; box-shadow: inset 0 1px rgba(190, 225, 245, .75); background: linear-gradient(90deg, rgba(28, 88, 144, .93) 0, rgba(40, 108, 164, .8) 18%, rgba(64, 148, 200, .8) 32%, rgba(40, 120, 185, .82) 48%, rgba(32, 102, 168, .85) 65%, rgba(42, 96, 152, .6) 76%, rgba(30, 70, 118, .88) 84%, rgba(18, 50, 96, .92) 100%); color: #fff; }
.orb { width: 40px; margin-right: 25px; }
.pinned { width: 34px; margin-right: 15px; }
.task { width: 59px; height: 38px; margin-right: 3px; display: grid; place-items: center; border: 1px solid #245a80; border-radius: 3px; box-shadow: inset 0 0 0 1px rgba(200, 235, 250, .65); background: linear-gradient(135deg, rgba(200, 230, 245, .55), rgba(120, 180, 215, .35) 50%, rgba(80, 150, 200, .35)); }
.task.on { padding-right: 5px; background: linear-gradient(135deg, rgba(250, 253, 255, .9), rgba(180, 220, 240, .6) 60%, rgba(140, 205, 235, .7)); box-shadow: inset 0 0 0 1px #eafaff, inset -4px 0 0 rgba(70, 140, 185, .7); }
.tray { display: flex; align-items: center; height: 100%; margin-left: auto; gap: 7px; font-family: "Open Sans", "Noto Sans", sans-serif; }
.tray .lang { margin: -5px 8px 0 0; }
.tray .chevron { margin-right: 4px; }
.tray time { width: 60px; margin: 0 2px 0 6px; text-align: center; line-height: 17px; white-space: nowrap; font-size: 11px; }
.peek { width: 14px; height: 38px; border: 1px solid #7d9cbb; background: linear-gradient(120deg, rgba(255, 255, 255, .35), rgba(255, 255, 255, .05) 60%); }
</style>
